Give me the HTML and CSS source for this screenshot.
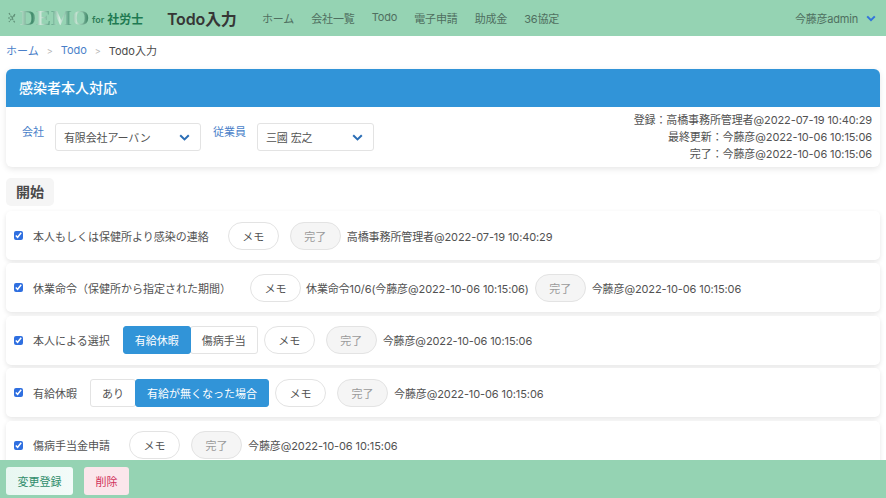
FILE: index.html
```html
<!DOCTYPE html>
<html lang="ja">
<head>
  <meta charset="UTF-8" />
  <meta name="viewport" content="width=device-width, initial-scale=1.0"/>
  <title>Todo入力</title>
  <link rel="stylesheet" href="styles.css">
</head>
<body>
  <nav class="navbar">
    <div class="logo">
      <svg class="logo-mark" width="10" height="14" viewBox="0 0 10 14"><path d="M2 2l6 10M8 3L2 11M1 7h3M6 5h3" stroke="#5f8f76" stroke-width="1.2" fill="none" stroke-dasharray="2 1"/></svg>
      <span class="logo-demo">DEMO</span>
      <span class="logo-for">for</span>
      <span class="logo-sub">社労士</span>
    </div>
    <span class="page-title">Todo入力</span>
    <div class="nav-menu">
      <a>ホーム</a>
      <a>会社一覧</a>
      <a>Todo</a>
      <a>電子申請</a>
      <a>助成金</a>
      <a>36協定</a>
    </div>
    <div class="nav-user">
      <span>今藤彦admin</span>
      <svg class="chev" width="10" height="7" viewBox="0 0 10 7"><path d="M1.2 1.4L5 5.2l3.8-3.8" stroke="#3273dc" stroke-width="2" fill="none"/></svg>
    </div>
  </nav>

  <div class="breadcrumb">
    <a>ホーム</a><span class="sep">&gt;</span><a>Todo</a><span class="sep">&gt;</span><span class="current">Todo入力</span>
  </div>

  <main class="content">
    <section class="panel">
      <div class="panel-heading">感染者本人対応</div>
      <div class="panel-body">
        <label class="field-label label-company">会社</label>
        <div class="select select-company">
          <span>有限会社アーバン</span>
          <svg class="chev" width="11" height="7" viewBox="0 0 11 7"><path d="M1.2 1.2L5.5 5.4l4.3-4.2" stroke="#2a6db5" stroke-width="2" fill="none"/></svg>
        </div>
        <label class="field-label label-employee">従業員</label>
        <div class="select select-employee">
          <span>三國 宏之</span>
          <svg class="chev" width="11" height="7" viewBox="0 0 11 7"><path d="M1.2 1.2L5.5 5.4l4.3-4.2" stroke="#2a6db5" stroke-width="2" fill="none"/></svg>
        </div>
        <div class="history">
          <div>登録：高橋事務所管理者@2022-07-19 10:40:29</div>
          <div>最終更新：今藤彦@2022-10-06 10:15:06</div>
          <div>完了：今藤彦@2022-10-06 10:15:06</div>
        </div>
      </div>
    </section>

    <div class="section-tag">開始</div>

    <div class="task">
      <input type="checkbox" checked />
      <span class="task-name">本人もしくは保健所より感染の連絡</span>
      <button class="btn btn-memo">メモ</button>
      <button class="btn btn-done">完了</button>
      <span class="task-log">高橋事務所管理者@2022-07-19 10:40:29</span>
    </div>

    <div class="task">
      <input type="checkbox" checked />
      <span class="task-name">休業命令（保健所から指定された期間）</span>
      <button class="btn btn-memo">メモ</button>
      <span class="task-log">休業命令10/6(今藤彦@2022-10-06 10:15:06)</span>
      <button class="btn btn-done">完了</button>
      <span class="task-log">今藤彦@2022-10-06 10:15:06</span>
    </div>

    <div class="task">
      <input type="checkbox" checked />
      <span class="task-name">本人による選択</span>
      <div class="toggle">
        <button class="toggle-item is-active">有給休暇</button>
        <button class="toggle-item">傷病手当</button>
      </div>
      <button class="btn btn-memo">メモ</button>
      <button class="btn btn-done">完了</button>
      <span class="task-log">今藤彦@2022-10-06 10:15:06</span>
    </div>

    <div class="task">
      <input type="checkbox" checked />
      <span class="task-name">有給休暇</span>
      <div class="toggle">
        <button class="toggle-item">あり</button>
        <button class="toggle-item is-active">有給が無くなった場合</button>
      </div>
      <button class="btn btn-memo">メモ</button>
      <button class="btn btn-done">完了</button>
      <span class="task-log">今藤彦@2022-10-06 10:15:06</span>
    </div>

    <div class="task">
      <input type="checkbox" checked />
      <span class="task-name">傷病手当金申請</span>
      <button class="btn btn-memo">メモ</button>
      <button class="btn btn-done">完了</button>
      <span class="task-log">今藤彦@2022-10-06 10:15:06</span>
    </div>
  </main>

  <footer class="footer-bar">
    <button class="action action-save">変更登録</button>
    <button class="action action-delete">削除</button>
  </footer>
</body>
</html>
```

FILE: styles.css
```css
* {
  box-sizing: border-box;
}
html, body {
  height: 100%;
}
body {
  margin: 0;
  height: 498px;
  overflow: hidden;
  position: relative;
  background: #fff;
  color: #525252;
  font-family: "Inter", "Noto Sans CJK JP", sans-serif;
  font-size: 11px;
}
button {
  font-family: inherit;
}
.navbar {
  height: 36px;
  background: #95d3b3;
  display: flex;
  align-items: center;
  padding-left: 7px;
  padding-right: 10px;
}
.logo {
  display: flex;
  align-items: center;
  width: 160px;
}
.logo-mark {
  margin-right: 3px;
}
.logo-demo {
  font-family: "Liberation Serif", serif;
  font-weight: bold;
  font-size: 21px;
  line-height: 20px;
  width: 72px;
  transform: scaleX(1.06);
  transform-origin: left;
  color: transparent;
  background: linear-gradient(90deg, #c4e3d1 0%, #3f8a6a 16%, #cfe8da 27%, #4f9a7a 40%, #d8eee2 52%, #5fa587 64%, #c2e2d0 74%, #3a8565 90%, #6fb092 100%);
  -webkit-background-clip: text;
  background-clip: text;
}
.logo-for {
  font-size: 9px;
  font-weight: 600;
  color: #2f7d5a;
  margin-right: 3px;
  margin-top: 3px;
}
.logo-sub {
  font-size: 12px;
  font-weight: 700;
  color: #1f7a52;
  margin-top: 1px;
}
.page-title {
  font-size: 16px;
  font-weight: 600;
  color: #363636;
  width: 95px;
  letter-spacing: -0.2px;
}
.nav-menu {
  display: flex;
  gap: 17px;
  font-size: 11px;
  color: #4f6f60;
  letter-spacing: -0.15px;
}
.nav-user {
  margin-left: auto;
  display: flex;
  align-items: center;
  gap: 8px;
  color: #4f6f60;
  font-size: 11px;
  letter-spacing: -0.2px;
}
.breadcrumb {
  height: 28px;
  display: flex;
  align-items: center;
  padding-left: 6px;
  color: #3273dc;
  font-size: 11px;
}
.breadcrumb a {
  color: #4a7fc9;
}
.sep {
  color: #b5b5b5;
  margin: 0 8px;
  font-size: 9px;
}
.current {
  color: #4a4a4a;
}
.content {
  padding: 5px 6px 0;
}
.panel {
  border-radius: 6px;
  box-shadow: 0 2px 6px rgba(10,10,10,0.1);
  background: #fff;
}
.panel-heading {
  height: 38px;
  background: #3194d8;
  color: #fff;
  border-radius: 6px 6px 0 0;
  font-size: 14px;
  font-weight: 500;
  display: flex;
  align-items: center;
  padding-left: 13px;
  padding-bottom: 2px;
}
.panel-body {
  height: 60px;
  display: flex;
  align-items: flex-start;
  position: relative;
  padding-top: 16px;
}
.field-label {
  color: #4a7fc9;
  font-size: 11px;
  line-height: 16px;
  margin-top: 1px;
}
.label-company {
  margin-left: 16px;
  width: 33px;
}
.label-employee {
  margin-left: 12px;
  width: 44px;
}
.select {
  height: 28px;
  margin-top: 0;
  border: 1px solid #e3e3e3;
  border-radius: 3px;
  display: flex;
  align-items: center;
  justify-content: space-between;
  padding: 0 10px 0 8px;
  font-size: 11px;
  letter-spacing: -0.15px;
}
.select-company {
  width: 146px;
}
.select-employee {
  width: 117px;
}
.history {
  margin-left: auto;
  margin-top: -11px;
  padding-right: 8px;
  text-align: right;
  font-size: 11px;
  line-height: 17px;
  letter-spacing: -0.1px;
}
.section-tag {
  display: inline-flex;
  align-items: center;
  justify-content: center;
  width: 48px;
  height: 28px;
  margin-top: 11px;
  padding-bottom: 3px;
  background: #f5f5f5;
  border-radius: 5px;
  font-size: 14px;
  font-weight: 600;
  color: #4a4a4a;
  vertical-align: top;
}
.task {
  height: 49px;
  margin-top: 3.4px;
  margin-bottom: 3.4px;
  display: flex;
  align-items: center;
  padding-left: 7px;
  background: #fff;
  border-radius: 5px;
  box-shadow: 0 2px 5px rgba(10,10,10,0.1);
}
.section-tag + .task {
  margin-top: 5px;
}
.task input {
  width: 9px;
  height: 9px;
  margin: 0 10px 0 1px;
  accent-color: #2f6fe0;
}
.task-name {
  margin-right: 14px;
  font-size: 11px;
}
.btn {
  height: 28px;
  width: 51px;
  padding: 0;
  border-radius: 14px;
  border: 1px solid #e3e3e3;
  font-size: 11px;
  flex: none;
}
.task .btn-memo {
  margin: 0 5px 0 5px;
  background: #fff;
  color: #525252;
}
.task .btn-done {
  margin: 0 6px 0 6px;
  background: #f5f5f5;
  color: #9a9a9a;
}
.task-log {
  font-size: 11px;
  letter-spacing: -0.1px;
}
.toggle {
  display: flex;
  height: 28px;
  margin-left: -1px;
  margin-right: 1px;
}
.toggle-item {
  border: 1px solid #e3e3e3;
  background: #fff;
  color: #525252;
  font-size: 11px;
  padding: 0 11px;
  border-radius: 3px;
  margin: 0;
}
.toggle-item + .toggle-item {
  margin-left: -1px;
}
.toggle-item.is-active {
  background: #3194d8;
  border-color: #3194d8;
  color: #fff;
  position: relative;
}
.footer-bar {
  position: absolute;
  left: 0;
  right: 0;
  bottom: 0;
  height: 38px;
  background: #95d3b3;
  display: flex;
  align-items: center;
  gap: 11px;
  padding-left: 6px;
  padding-top: 3px;
}
.action {
  height: 28px;
  border: none;
  border-radius: 3px;
  font-size: 11px;
}
.action-save {
  width: 67px;
  background: linear-gradient(90deg, #e8f7f1, #f3fbf9);
  color: #2f8d6b;
}
.action-delete {
  width: 45px;
  background: #fbe6eb;
  color: #d0305a;
}
```
